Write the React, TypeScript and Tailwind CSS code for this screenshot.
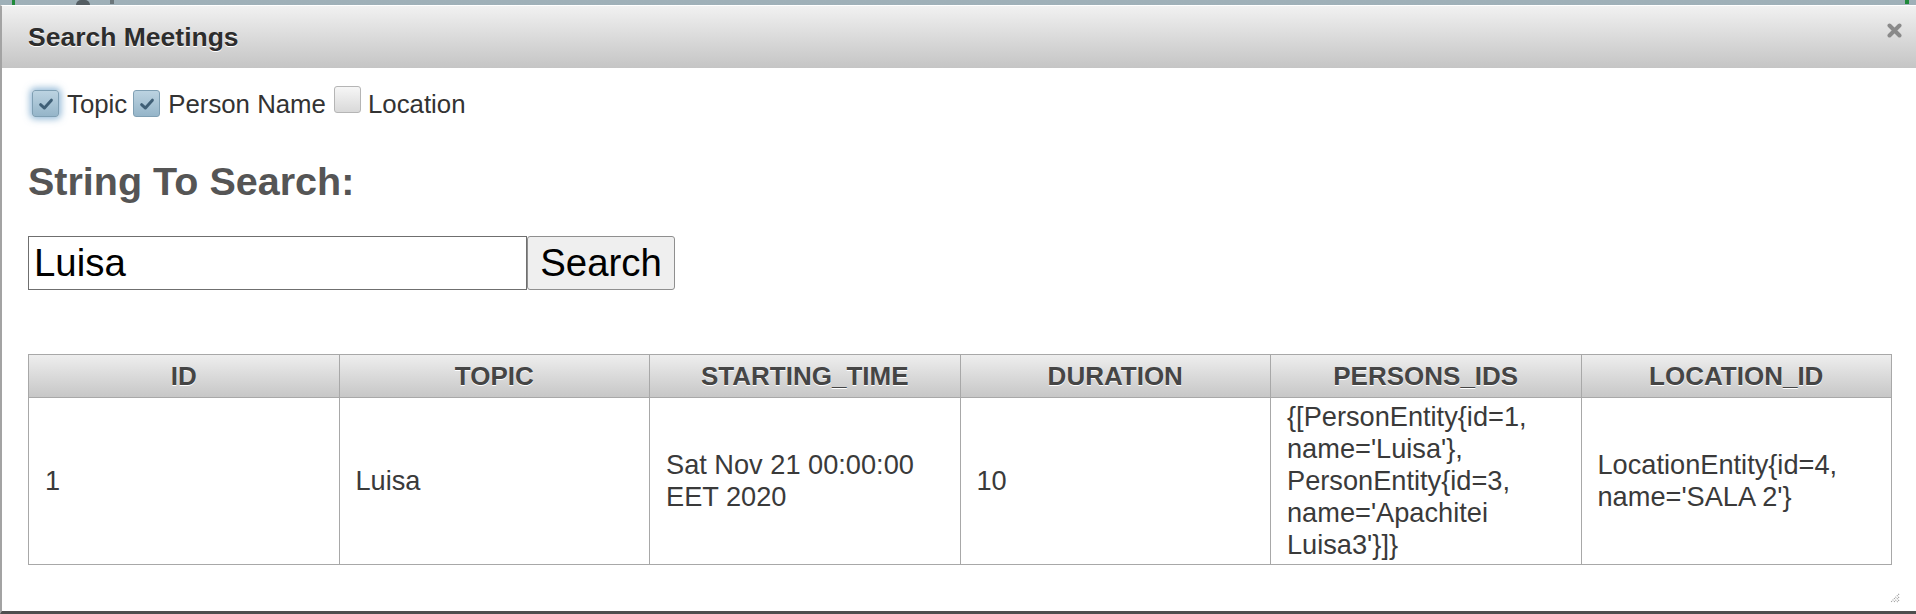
import React from "react";

const font = { fontFamily: '"Liberation Sans", Arial, Helvetica, sans-serif' };

function Check({ checked, focus }: { checked: boolean; focus?: boolean }) {
  return (
    <span
      className={
        "inline-flex items-center justify-center w-[27px] h-[27px] rounded-[3px] border shrink-0 " +
        (checked
          ? "bg-gradient-to-b from-[#bcd3e1] to-[#95b5c9] border-[#7f9fb3]"
          : "bg-gradient-to-b from-[#f6f6f6] to-[#d9d9d9] border-[#b5b5b5]") +
        (focus ? " shadow-[0_0_7px_2px_rgba(110,160,200,0.75)]" : "")
      }
    >
      {checked && (
        <svg width="18" height="18" viewBox="0 0 16 16">
          <path d="M3.2 8.6 L6.6 11.6 L12.8 4.6" fill="none" stroke="#3f5f76" strokeWidth="2.6" strokeLinecap="round" strokeLinejoin="round" />
        </svg>
      )}
    </span>
  );
}

export default function App() {
  const headers = ["ID", "TOPIC", "STARTING_TIME", "DURATION", "PERSONS_IDS", "LOCATION_ID"];
  const row = [
    "1",
    "Luisa",
    "Sat Nov 21 00:00:00 EET 2020",
    "10",
    "{[PersonEntity{id=1, name='Luisa'}, PersonEntity{id=3, name='Apachitei Luisa3'}]}",
    "LocationEntity{id=4, name='SALA 2'}",
  ];
  return (
    <div className="relative w-[1916px] h-[614px] overflow-hidden bg-gradient-to-b from-[#9fb0b8] to-[#b3c0c6] pt-[5px]" style={font}>
      {/* background bits peeking above the dialog */}
      <div className="absolute left-[12px] top-0 w-[3px] h-[5px] bg-[#1f8a3a]" />
      <div className="absolute left-[76px] top-0 w-[14px] h-[5px] bg-[#555e63] rounded-t-full" />
      <div className="absolute left-[110px] top-0 w-[4px] h-[4px] bg-[#6b767b]" />
      <div className="absolute left-[1905px] top-0 w-[4px] h-[4px] bg-[#1f8a3a]" />

      <div className="relative h-[609px] bg-white border-l-2 border-[#a3a3a3] border-b-[3px] border-b-[#4e4e4e] border-t border-t-white flex flex-col">
        {/* title bar */}
        <div className="h-[62px] shrink-0 bg-gradient-to-b from-[#f1f1f1] to-[#c5c5c5] flex items-center pl-[26px] pt-[2px]">
          <span className="text-[26.5px] font-bold text-[#2d2d2d] [text-shadow:0_1px_0_#fff]">Search Meetings</span>
          <svg className="absolute right-[14px] top-[17px]" width="15" height="15" viewBox="0 0 15 15">
            <path d="M2.5 2.5 L12.5 12.5 M12.5 2.5 L2.5 12.5" stroke="#8a8a8a" strokeWidth="4" strokeLinecap="round" />
          </svg>
        </div>

        {/* content */}
        <div className="pl-[26px] text-[#333]">
          <div className="mt-[16px] h-[40px] flex items-center text-[25.8px]">
            <span className="ml-[4px]"><Check checked focus /></span>
            <span className="ml-[8px]">Topic</span>
            <span className="ml-[6px]"><Check checked /></span>
            <span className="ml-[8px]">Person Name</span>
            <span className="ml-[8px]"><Check checked={false} /></span>
            <span className="ml-[7px]">Location</span>
          </div>

          <h2 className="mt-[35px] h-[44px] leading-[44px] text-[39.5px] font-bold text-[#555]">String To Search:</h2>

          <div className="mt-[33px] flex items-stretch h-[54px]">
            <div className="w-[499px] border border-[#6f6f6f] flex items-center pl-[5px] text-[38.4px] text-black bg-white">Luisa</div>
            <button className="w-[148px] border border-[#8f8f8f] rounded-[3px] bg-[#efefef] text-[38.4px] text-black leading-none flex items-center justify-center">
              Search
            </button>
          </div>

          <table className="mt-[64px] w-[1864px] table-fixed border-collapse">
            <thead>
              <tr className="h-[43px] bg-gradient-to-b from-[#eeeeee] to-[#c6c6c6]">
                {headers.map((h) => (
                  <th key={h} className="border border-[#a8a8a8] text-[26px] font-bold text-[#454545] [text-shadow:0_1px_0_#fff] text-center">
                    {h}
                  </th>
                ))}
              </tr>
            </thead>
            <tbody>
              <tr className="h-[166px]">
                {row.map((c, i) => (
                  <td key={i} className="border border-[#a8a8a8] px-[16px] py-[3px] align-middle text-[27.2px] leading-[32px] text-[#3a3a3a] break-words">
                    {c}
                  </td>
                ))}
              </tr>
            </tbody>
          </table>
        </div>

        {/* resize grip */}
        <svg className="absolute right-[16px] bottom-[8px]" width="12" height="12" viewBox="0 0 12 12">
          <path d="M11 3 L3 11 M11 6 L6 11 M11 9 L9 11" stroke="#9a9a9a" strokeWidth="1.2" strokeDasharray="1 1" />
        </svg>
      </div>
    </div>
  );
}
